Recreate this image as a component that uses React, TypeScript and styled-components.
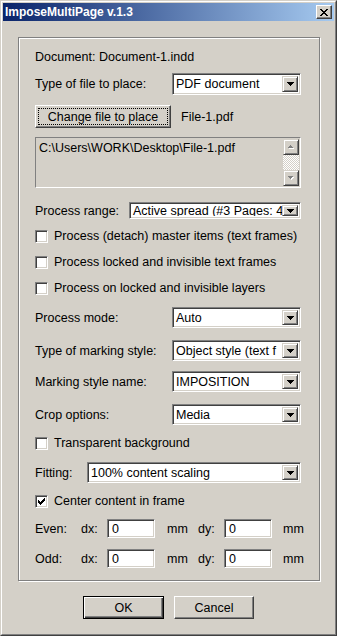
import styled, { createGlobalStyle } from "styled-components";

const face = "#d4d0c8";
const shadow = "#808080";
const dark = "#404040";

const GlobalStyle = createGlobalStyle`
  html, body {
    margin: 0;
    padding: 0;
    background: ${face};
  }
  body {
    font-family: "Liberation Sans", Arial, sans-serif;
    font-size: 12.5px;
    color: #000;
  }
`;

const Window = styled.div`
  width: 337px;
  height: 636px;
  box-sizing: border-box;
  background: ${face};
  border: 1px solid;
  border-color: ${face} ${dark} ${dark} ${face};
  display: flex;
  flex-direction: column;
`;

const WindowInner = styled.div`
  flex: 1;
  border: 1px solid;
  border-color: #fff ${shadow} ${shadow} #fff;
  padding: 1px;
  display: flex;
  flex-direction: column;
`;

const TitleBar = styled.div`
  height: 18px;
  display: flex;
  align-items: center;
  justify-content: space-between;
  padding: 0 2px 0 2px;
  background: linear-gradient(to right, #0a246a, #a6caf0);
`;

const Title = styled.span`
  color: #fff;
  font-weight: bold;
  font-size: 12px;
`;

const CloseButton = styled.div`
  width: 16px;
  height: 14px;
  box-sizing: border-box;
  display: flex;
  align-items: center;
  justify-content: center;
  background: ${face};
  border: 1px solid;
  border-color: #fff ${dark} ${dark} #fff;
  box-shadow: inset -1px -1px ${shadow};
`;

const Body = styled.div`
  padding: 16px 0 0 15px;
  display: flex;
  flex-direction: column;
`;

const Group = styled.div`
  width: 302px;
  box-sizing: border-box;
  border: 1px solid ${shadow};
  box-shadow: inset 1px 1px #fff, 1px 1px #fff;
  padding: 0 18px 12px 16px;
  display: flex;
  flex-direction: column;
`;

const Row = styled.div<{ $mt: number; $h: number }>`
  margin-top: ${(p) => p.$mt}px;
  height: ${(p) => p.$h}px;
  display: flex;
  align-items: center;
  white-space: nowrap;
`;

const Label = styled.span<{ $w?: number }>`
  flex: none;
  width: ${(p) => (p.$w ? `${p.$w}px` : "auto")};
`;

const SelectBox = styled.div`
  flex: 1;
  min-width: 0;
  height: 100%;
  box-sizing: border-box;
  display: flex;
  align-items: stretch;
  background: #fff;
  border: 1px solid;
  border-color: ${shadow} #fff #fff ${shadow};
  box-shadow: inset 1px 1px ${dark}, inset -1px -1px ${face};
  padding: 2px;
`;

const SelectText = styled.span`
  flex: 1;
  min-width: 0;
  overflow: hidden;
  padding-left: 1px;
  display: flex;
  align-items: center;
`;

const DropButton = styled.div`
  flex: none;
  width: 16px;
  box-sizing: border-box;
  display: flex;
  align-items: center;
  justify-content: center;
  background: ${face};
  border: 1px solid;
  border-color: ${face} ${dark} ${dark} ${face};
  box-shadow: inset 1px 1px #fff, inset -1px -1px ${shadow};
`;

const PushButton = styled.div<{ $w: number; $default?: boolean; $focus?: boolean }>`
  width: ${(p) => p.$w}px;
  height: 100%;
  box-sizing: border-box;
  display: flex;
  align-items: center;
  justify-content: center;
  background: ${face};
  border: 1px solid;
  border-color: ${(p) => (p.$default ? "#000" : `#fff ${dark} ${dark} #fff`)};
  box-shadow: ${(p) =>
    p.$default
      ? `inset 1px 1px #fff, inset -1px -1px ${dark}, inset -2px -2px ${shadow}`
      : `inset -1px -1px ${shadow}`};
  outline: ${(p) => (p.$focus ? "1px dotted #000" : "none")};
  outline-offset: -4px;
`;

const FileName = styled.span`
  margin-left: 10px;
`;

const PathBox = styled.div`
  flex: 1;
  height: 100%;
  box-sizing: border-box;
  display: flex;
  justify-content: space-between;
  border: 1px solid;
  border-color: ${shadow} #fff #fff ${shadow};
  padding: 1px 1px 1px 3px;
`;

const PathText = styled.span`
  padding-top: 2px;
`;

const ScrollBar = styled.div`
  width: 16px;
  display: flex;
  flex-direction: column;
`;

const ScrollArrow = styled.div`
  height: 16px;
  flex: none;
  box-sizing: border-box;
  display: flex;
  align-items: center;
  justify-content: center;
  background: ${face};
  border: 1px solid;
  border-color: ${face} ${dark} ${dark} ${face};
  box-shadow: inset 1px 1px #fff, inset -1px -1px ${shadow};
`;

const ScrollTrack = styled.div`
  flex: 1;
  background: repeating-conic-gradient(#fff 0 25%, ${face} 0 50%) 0 0 / 2px 2px;
`;

const CheckRow = styled(Row)`
  gap: 6px;
`;

const CheckBox = styled.div`
  width: 13px;
  height: 13px;
  flex: none;
  box-sizing: border-box;
  background: #fff;
  border: 1px solid;
  border-color: ${shadow} #fff #fff ${shadow};
  box-shadow: inset 1px 1px ${dark}, inset -1px -1px ${face};
  display: flex;
`;

const OffsetGrid = styled.div<{ $mt: number }>`
  margin-top: ${(p) => p.$mt}px;
  height: 19px;
  display: grid;
  grid-template-columns: 46px 26px 48px 43px 26px 48px auto;
  align-items: center;
`;

const NumberInput = styled.div`
  height: 19px;
  box-sizing: border-box;
  display: flex;
  align-items: center;
  padding-left: 4px;
  background: #fff;
  border: 1px solid;
  border-color: ${shadow} #fff #fff ${shadow};
  box-shadow: inset 1px 1px ${dark}, inset -1px -1px ${face};
`;

const Unit = styled.span<{ $pl: number }>`
  padding-left: ${(p) => p.$pl}px;
`;

const ButtonBar = styled.div`
  margin-top: 15px;
  height: 23px;
  display: flex;
  justify-content: center;
  gap: 10px;
  padding-right: 15px;
`;

const DownArrow = () => (
  <svg width="7" height="4" viewBox="0 0 7 4" shapeRendering="crispEdges">
    <path d="M0 0h7v1H0zM1 1h5v1H1zM2 2h3v1H2zM3 3h1v1H3z" fill="#000" />
  </svg>
);

const UpArrowDisabled = () => (
  <svg width="8" height="5" viewBox="0 0 8 5" shapeRendering="crispEdges">
    <path d="M4 1h1v1H4zM3 2h3v1H3zM2 3h5v1H2z" fill="#fff" />
    <path d="M3 0h1v1H3zM2 1h3v1H2zM1 2h5v1H1z" fill={shadow} />
  </svg>
);

const DownArrowDisabled = () => (
  <svg width="8" height="5" viewBox="0 0 8 5" shapeRendering="crispEdges">
    <path d="M2 1h5v1H2zM3 2h3v1H3zM4 3h1v1H4z" fill="#fff" />
    <path d="M1 0h5v1H1zM2 1h3v1H2zM3 2h1v1H3z" fill={shadow} />
  </svg>
);

const Select = ({ value }: { value: string }) => (
  <SelectBox>
    <SelectText>{value}</SelectText>
    <DropButton>
      <DownArrow />
    </DropButton>
  </SelectBox>
);

const Check = ({ label, checked, mt }: { label: string; checked?: boolean; mt: number }) => (
  <CheckRow $mt={mt} $h={16}>
    <CheckBox>
      {checked && (
        <svg width="11" height="11" viewBox="0 0 11 11" shapeRendering="crispEdges">
          <path
            d="M2 4h1v3H2zM3 5h1v3H3zM4 6h1v3H4zM5 5h1v3H5zM6 4h1v3H6zM7 3h1v3H7zM8 2h1v3H8z"
            fill="#000"
          />
        </svg>
      )}
    </CheckBox>
    <span>{label}</span>
  </CheckRow>
);

const Offsets = ({ name, mt }: { name: string; mt: number }) => (
  <OffsetGrid $mt={mt}>
    <span>{name}</span>
    <span>dx:</span>
    <NumberInput>0</NumberInput>
    <Unit $pl={12}>mm</Unit>
    <span>dy:</span>
    <NumberInput>0</NumberInput>
    <Unit $pl={11}>mm</Unit>
  </OffsetGrid>
);

const App = () => {
  return (
    <>
      <GlobalStyle />
      <Window>
        <WindowInner>
          <TitleBar>
            <Title>ImposeMultiPage v.1.3</Title>
            <CloseButton>
              <svg width="8" height="7" viewBox="0 0 8 7" shapeRendering="crispEdges">
                <path
                  d="M0 0h2v1H0zM6 0h2v1H6zM1 1h2v1H1zM5 1h2v1H5zM2 2h4v1H2zM3 3h2v1H3zM2 4h4v1H2zM1 5h2v1H1zM5 5h2v1H5zM0 6h2v1H0zM6 6h2v1H6z"
                  fill="#000"
                />
              </svg>
            </CloseButton>
          </TitleBar>
          <Body>
            <Group>
              <Row $mt={11} $h={16}>
                <Label>Document: Document-1.indd</Label>
              </Row>
              <Row $mt={8} $h={22}>
                <Label $w={137}>Type of file to place:</Label>
                <Select value="PDF document" />
              </Row>
              <Row $mt={10} $h={23}>
                <PushButton $w={136} $focus>
                  Change file to place
                </PushButton>
                <FileName>File-1.pdf</FileName>
              </Row>
              <Row $mt={9} $h={51}>
                <PathBox>
                  <PathText>C:\Users\WORK\Desktop\File-1.pdf</PathText>
                  <ScrollBar>
                    <ScrollArrow>
                      <UpArrowDisabled />
                    </ScrollArrow>
                    <ScrollTrack />
                    <ScrollArrow>
                      <DownArrowDisabled />
                    </ScrollArrow>
                  </ScrollBar>
                </PathBox>
              </Row>
              <Row $mt={14} $h={17}>
                <Label $w={94}>Process range:</Label>
                <Select value="Active spread (#3 Pages: 4" />
              </Row>
              <Check mt={9} label="Process (detach) master items (text frames)" />
              <Check mt={10} label="Process locked and invisible text frames" />
              <Check mt={10} label="Process on locked and invisible layers" />
              <Row $mt={11} $h={21}>
                <Label $w={137}>Process mode:</Label>
                <Select value="Auto" />
              </Row>
              <Row $mt={12} $h={21}>
                <Label $w={137}>Type of marking style:</Label>
                <Select value="Object style (text f" />
              </Row>
              <Row $mt={10} $h={21}>
                <Label $w={137}>Marking style name:</Label>
                <Select value="IMPOSITION" />
              </Row>
              <Row $mt={12} $h={21}>
                <Label $w={137}>Crop options:</Label>
                <Select value="Media" />
              </Row>
              <Check mt={10} label="Transparent background" />
              <Row $mt={11} $h={21}>
                <Label $w={52}>Fitting:</Label>
                <Select value="100% content scaling" />
              </Row>
              <Check mt={10} label="Center content in frame" checked />
              <Offsets name="Even:" mt={10} />
              <Offsets name="Odd:" mt={11} />
            </Group>
            <ButtonBar>
              <PushButton $w={81} $default>
                OK
              </PushButton>
              <PushButton $w={80}>Cancel</PushButton>
            </ButtonBar>
          </Body>
        </WindowInner>
      </Window>
    </>
  );
};

export default App;
